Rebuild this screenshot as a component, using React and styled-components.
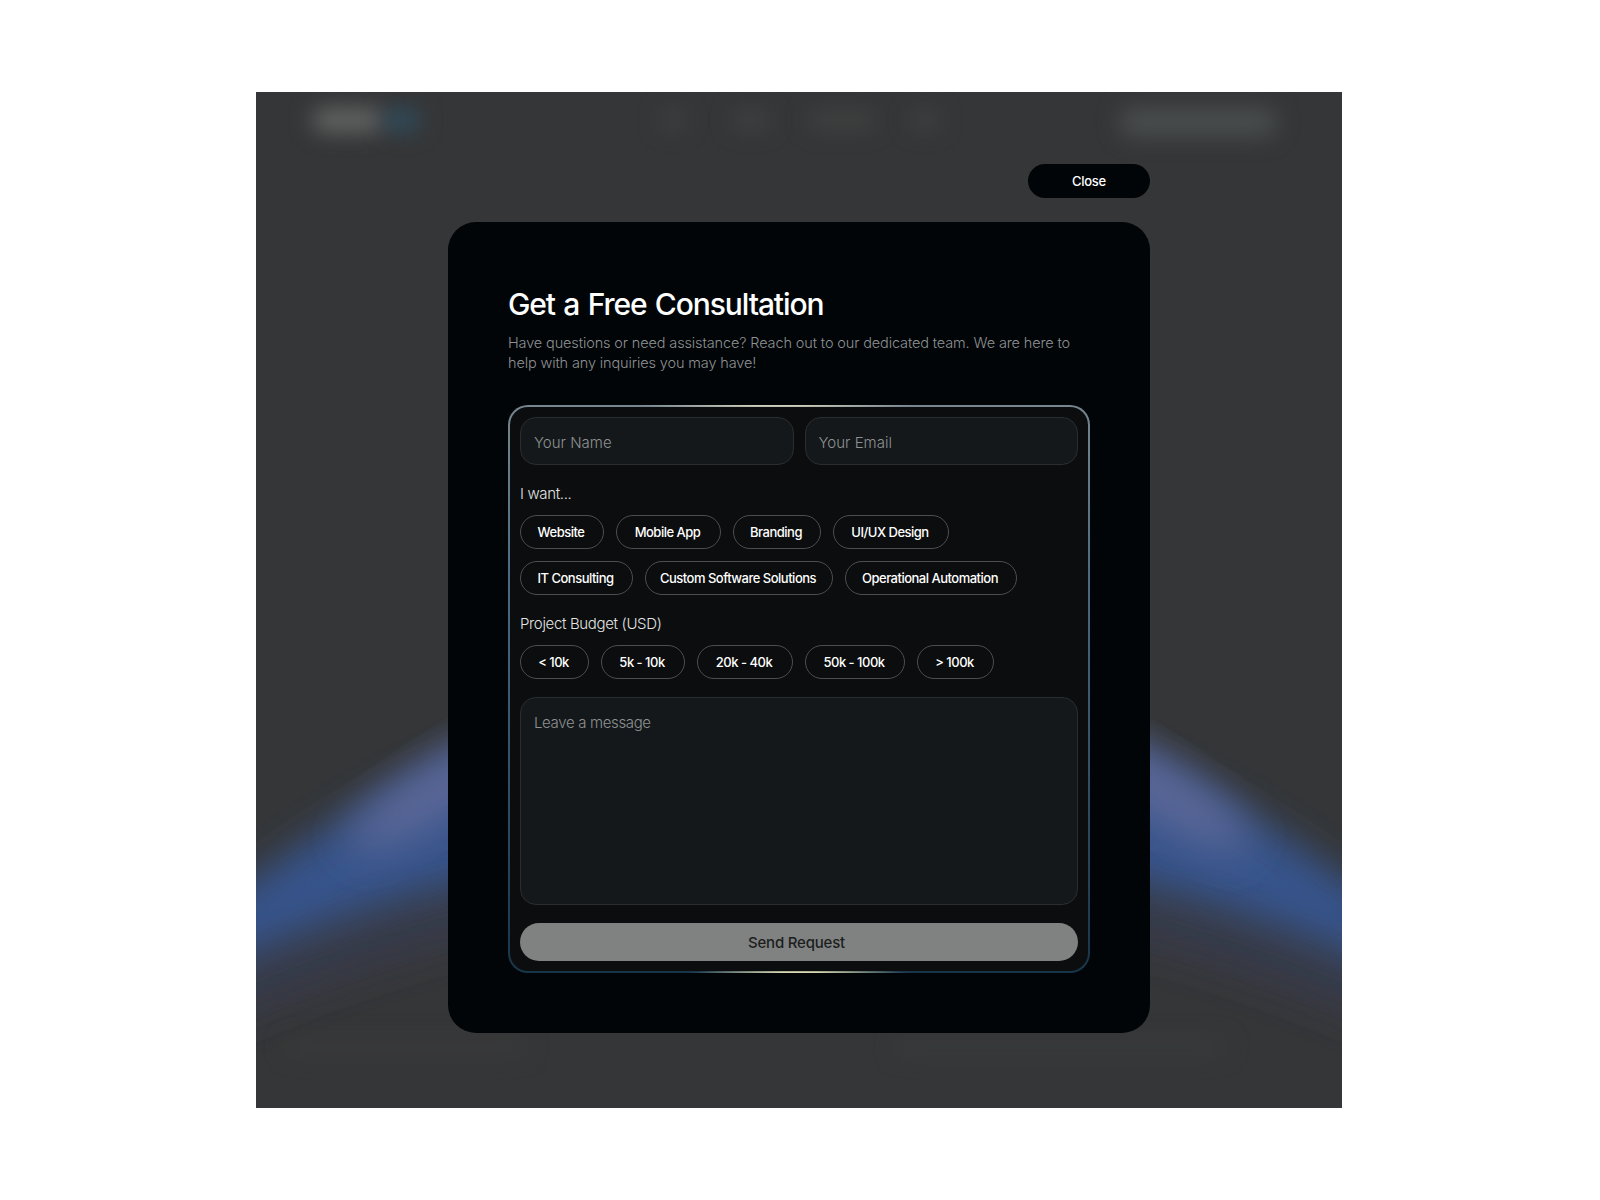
import React from 'react';
import styled, { createGlobalStyle } from 'styled-components';

const GlobalStyle = createGlobalStyle`
    html, body {
        margin: 0;
        background: #fff;
    }
    * {
        box-sizing: border-box;
    }
`

const Page = styled.div`
    display: flex;
    justify-content: center;
    padding: 92px 2px 0 0;
    height: 1200px;
    font-family: 'Inter', 'Liberation Sans', sans-serif;
`

const Panel = styled.main`
    position: relative;
    overflow: hidden;
    width: 1086px;
    height: 1016px;
    background: #353637;
    display: flex;
    flex-direction: column;
    align-items: center;
`

const Smudge = styled.div`
    position: absolute;
    left: ${p => p.$x}px;
    top: ${p => p.$y}px;
    width: ${p => p.$w}px;
    height: ${p => p.$h}px;
    background: ${p => p.$color};
    border-radius: 12px;
    filter: blur(${p => p.$blur || 11}px);
`

const Glow = styled.svg`
    position: absolute;
    left: 0;
    top: 0;
`

const Column = styled.div`
    position: relative;
    width: 702px;
    margin-top: 72px;
    display: flex;
    flex-direction: column;
    align-items: flex-end;
`

const CloseButton = styled.button`
    width: 122px;
    height: 34px;
    border: 0;
    border-radius: 17px;
    background: #010507;
    color: #fff;
    font: 500 13px 'Inter', sans-serif;
    letter-spacing: -0.3px;
    margin-bottom: 24px;
`

const Modal = styled.section`
    width: 100%;
    height: 811px;
    padding: 60px;
    border-radius: 28px;
    background: #010507;
`

const Title = styled.h1`
    margin: 0;
    color: #fff;
    font-size: 30px;
    line-height: 44px;
    font-weight: 550;
    letter-spacing: -1.1px;
    word-spacing: 1.5px;
`

const Lead = styled.p`
    margin: 7px 0 32px;
    color: #8e9193;
    font-size: 14.5px;
    line-height: 20px;
    font-weight: 300;
    letter-spacing: -0.13px;
`

const Form = styled.form`
    height: 568px;
    padding: 10px;
    border: 2px solid transparent;
    border-radius: 20px;
    background:
        linear-gradient(#0b0d0e, #0b0d0e) padding-box,
        radial-gradient(ellipse 110px 4px at 50% 100%, #d9d8ae 0%, #d9d8ae 20%, transparent 100%) border-box,
        radial-gradient(ellipse 140px 4px at 46% 0, #cfcfba 0%, #cfcfba 20%, transparent 100%) border-box,
        linear-gradient(180deg, #76858f 0%, #4c6b80 30%, #18364b 100%) border-box;
    display: flex;
    flex-direction: column;
`

const Fields = styled.div`
    display: flex;
    gap: 11px;
`

const TextInput = styled.input`
    flex: 1;
    min-width: 0;
    height: 48px;
    padding: 2px 13px 0;
    border: 1px solid #2a2e30;
    border-radius: 16px;
    background: #14181a;
    color: #fff;
    font: 300 15px 'Inter', sans-serif;
    &::placeholder {
        color: #8e9193;
    }
`

const Label = styled.div`
    margin: 19px 0 11px;
    color: #e2e3e3;
    font-size: 15px;
    line-height: 20px;
    font-weight: 300;
    letter-spacing: -0.35px;
`

const Chips = styled.div`
    display: flex;
    gap: 12px;
    & + & {
        margin-top: 12px;
    }
`

const Chip = styled.button`
    width: ${p => p.$width}px;
    height: 34px;
    padding: 0 2px 0 0;
    border: 1px solid #4b4e50;
    border-radius: 17px;
    background: transparent;
    color: #fff;
    font: 500 13px 'Inter', sans-serif;
    letter-spacing: -0.5px;
`

const Message = styled.textarea`
    display: block;
    width: 100%;
    height: 208px;
    margin: 18px 0;
    padding: 15px 13px;
    border: 1px solid #2a2e30;
    border-radius: 16px;
    background: #14181a;
    color: #fff;
    resize: none;
    font: 300 15px/20px 'Inter', sans-serif;
    letter-spacing: -0.35px;
    &::placeholder {
        color: #8e9193;
    }
`

const Send = styled.button`
    height: 38px;
    border: 0;
    border-radius: 19px;
    padding: 1px 5px 0 0;
    background: #808281;
    color: #1c1e1e;
    font: 500 15px 'Inter', sans-serif;
    letter-spacing: -0.2px;
`

const serviceRows = [
    [['Website', 84], ['Mobile App', 105], ['Branding', 88], ['UI/UX Design', 116]],
    [['IT Consulting', 113], ['Custom Software Solutions', 188], ['Operational Automation', 172]],
]
const budgets = [['< 10k', 69], ['5k - 10k', 84], ['20k - 40k', 96], ['50k - 100k', 100], ['> 100k', 77]]

const BackdropGlow = () => (
    <Glow width="1086" height="1016" viewBox="0 0 1086 1016" aria-hidden="true">
        <defs>
            <filter id="band" x="-20%" y="-50%" width="140%" height="200%">
                <feGaussianBlur stdDeviation="19" />
            </filter>
            <filter id="haze" x="-50%" y="-50%" width="200%" height="200%">
                <feGaussianBlur stdDeviation="20" />
            </filter>
        </defs>
        <path d="M-100 935 Q543 620 1186 935" fill="none" stroke="#3c4360" strokeOpacity=".45" strokeWidth="60" filter="url(#haze)" />
        <path d="M-100 865 Q543 305 1186 865 L1186 905 Q543 590 -100 905 Z" fill="#35548f" fillOpacity=".95" filter="url(#band)" />
        <ellipse cx="182" cy="698" rx="105" ry="28" fill="#5c6797" transform="rotate(-33 182 698)" filter="url(#haze)" />
        <ellipse cx="904" cy="698" rx="105" ry="28" fill="#5c6797" transform="rotate(33 904 698)" filter="url(#haze)" />
    </Glow>
)

const App = () => (
    <Page>
        <GlobalStyle />
        <Panel>
            <BackdropGlow />
            <Smudge $x={56} $y={17} $w={72} $h={22} $color="#686968" />
            <Smudge $x={128} $y={17} $w={36} $h={22} $color="#2f4f62" />
            <Smudge $x={404} $y={20} $w={26} $h={16} $color="#424343" />
            <Smudge $x={476} $y={20} $w={38} $h={16} $color="#424343" />
            <Smudge $x={552} $y={20} $w={68} $h={16} $color="#424343" />
            <Smudge $x={654} $y={20} $w={30} $h={16} $color="#424343" />
            <Smudge $x={864} $y={16} $w={156} $h={28} $color="#4a4e4e" />
            <Smudge $x={30} $y={948} $w={240} $h={14} $color="#3a3b3c" />
            <Smudge $x={640} $y={948} $w={330} $h={14} $color="#393c3c" />
            <Column>
                <CloseButton type="button">Close</CloseButton>
                <Modal>
                    <Title>Get a Free Consultation</Title>
                    <Lead>Have questions or need assistance? Reach out to our dedicated team. We are here to help with any inquiries you may have!</Lead>
                    <Form>
                        <Fields>
                            <TextInput placeholder="Your Name" />
                            <TextInput placeholder="Your Email" />
                        </Fields>
                        <Label>I want...</Label>
                        {serviceRows.map(row => (
                            <Chips key={row[0][0]}>
                                {row.map(([label, width]) => <Chip type="button" key={label} $width={width}>{label}</Chip>)}
                            </Chips>
                        ))}
                        <Label>Project Budget (USD)</Label>
                        <Chips>
                            {budgets.map(([label, width]) => <Chip type="button" key={label} $width={width}>{label}</Chip>)}
                        </Chips>
                        <Message placeholder="Leave a message" />
                        <Send type="button">Send Request</Send>
                    </Form>
                </Modal>
            </Column>
        </Panel>
    </Page>
)

export default App;
